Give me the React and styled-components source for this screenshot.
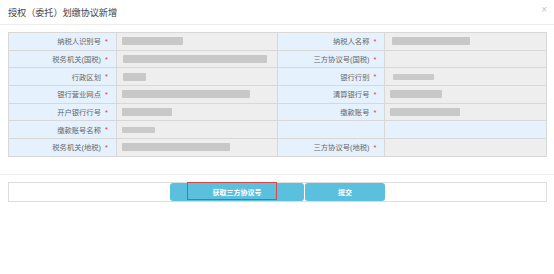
import React from "react";
import styled, { createGlobalStyle } from "styled-components";

const GlobalStyle = createGlobalStyle`
  body {
    margin: 0;
    background: #fff;
    font-family: "Liberation Sans", "Noto Sans CJK SC", sans-serif;
  }
`;

const Header = styled.div`
  height: 25px;
  box-sizing: border-box;
  padding: 0 8px 0 8px;
  display: flex;
  align-items: center;
  justify-content: space-between;
  border-bottom: 1px solid #eeeeee;
`;

const Title = styled.h3`
  margin: 0;
  font-size: 9.2px;
  font-weight: normal;
  color: #444;
  letter-spacing: -0.1px;
`;

const Close = styled.span`
  font-size: 10px;
  color: #c4c4c4;
  margin-top: -5px;
  margin-right: -1px;
`;

const Grid = styled.div`
  margin: 7px 7px 0 8px;
  display: grid;
  grid-template-columns: 107fr 160fr 107fr 161fr;
  grid-auto-rows: 16.7px;
  gap: 1px;
  padding: 1px;
  background: #d8d8d8;
`;

const Label = styled.div`
  background: #e5f1fd;
  display: flex;
  align-items: center;
  justify-content: flex-end;
  padding-right: 8px;
  font-size: 7.3px;
  color: #666;
  white-space: nowrap;
`;

const Star = styled.span`
  color: #e4393c;
  margin-left: 4px;
`;

const Value = styled.div`
  background: ${(p) => (p.$blank ? "#e5f1fd" : "#eeeeee")};
  display: flex;
  align-items: center;
  padding-left: ${(p) => p.$pad || 5}px;
`;

const Bar = styled.span`
  display: block;
  height: ${(p) => (p.$thin ? 6 : 8)}px;
  background: ${(p) => (p.$thin ? "#cacaca" : "#c8c8c8")};
  border-radius: 1px;
`;

const Footer = styled.div`
  margin-top: 17px;
  border-top: 1px solid #eeeeee;
  padding: 7px 7px 0 8px;
`;

const ButtonBar = styled.div`
  border: 1px solid #dddddd;
  height: 18px;
  display: flex;
  justify-content: center;
  gap: 1px;
`;

const Button = styled.button`
  position: relative;
  width: ${(p) => p.$w}px;
  height: 18px;
  border: none;
  border-radius: 3px;
  background: #5bc0de;
  color: #fff;
  font-family: inherit;
  font-size: 7px;
  font-weight: bold;
  padding: 0;
  cursor: pointer;
`;

const FocusRing = styled.span`
  position: absolute;
  left: 17px;
  top: -1px;
  width: 90px;
  height: 18px;
  border: 1px solid #d04a4a;
  box-sizing: border-box;
  pointer-events: none;
`;

const rows = [
  [
    { label: "纳税人识别号", bar: 61 },
    { label: "纳税人名称", bar: 78, pad: 7 },
  ],
  [
    { label: "税务机关(国税)", bar: 144, pad: 6 },
    { label: "三方协议号(国税)" },
  ],
  [
    { label: "行政区划", bar: 23, pad: 6 },
    { label: "银行行别", bar: 41, pad: 8, thin: true },
  ],
  [
    { label: "银行营业网点", bar: 128 },
    { label: "清算银行号", bar: 52, pad: 5 },
  ],
  [
    { label: "开户银行行号", bar: 50 },
    { label: "缴款账号", bar: 70, pad: 5 },
  ],
  [
    { label: "缴款账号名称", bar: 33, thin: true },
    { label: "", blank: true, noStar: true },
  ],
  [
    { label: "税务机关(地税)", bar: 108 },
    { label: "三方协议号(地税)" },
  ],
];

export default function App() {
  return (
    <>
      <GlobalStyle />
      <Header>
        <Title>授权（委托）划缴协议新增</Title>
        <Close>×</Close>
      </Header>
      <Grid>
        {rows.map((row, i) =>
          row.map((cell, j) => (
            <React.Fragment key={`${i}-${j}`}>
              <Label>
                {cell.label}
                {!cell.noStar && <Star>*</Star>}
              </Label>
              <Value $blank={cell.blank} $pad={cell.pad}>
                {cell.bar && <Bar $thin={cell.thin} style={{ width: cell.bar }} />}
              </Value>
            </React.Fragment>
          ))
        )}
      </Grid>
      <Footer>
        <ButtonBar>
          <Button $w={134}>
            获取三方协议号
            <FocusRing />
          </Button>
          <Button $w={80}>提交</Button>
        </ButtonBar>
      </Footer>
    </>
  );
}
